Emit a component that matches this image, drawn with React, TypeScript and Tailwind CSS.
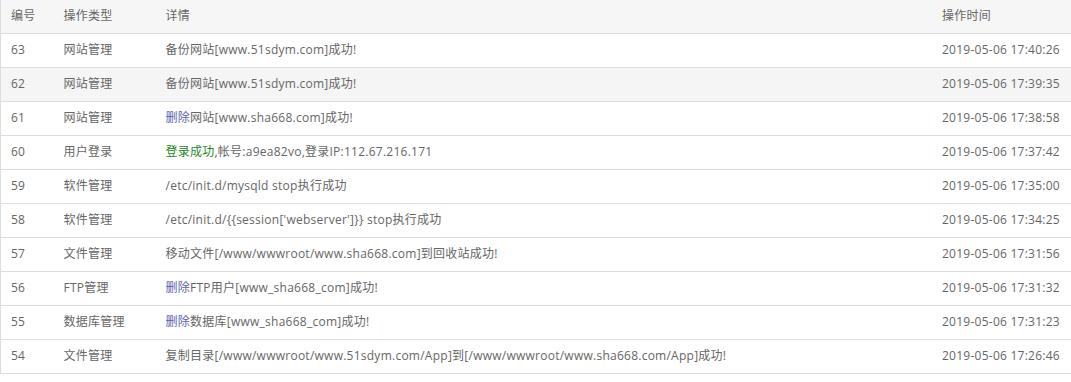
const rows: { id: number; type: string; detail: React.ReactNode; time: string; hover?: boolean }[] = [
  { id: 63, type: "网站管理", detail: "备份网站[www.51sdym.com]成功!", time: "2019-05-06 17:40:26" },
  { id: 62, type: "网站管理", detail: "备份网站[www.51sdym.com]成功!", time: "2019-05-06 17:39:35", hover: true },
  {
    id: 61,
    type: "网站管理",
    detail: (
      <>
        <span className="text-[#5a5fb0]">删除</span>网站[www.sha668.com]成功!
      </>
    ),
    time: "2019-05-06 17:38:58",
  },
  {
    id: 60,
    type: "用户登录",
    detail: (
      <>
        <span className="text-[#1a8a1a]">登录成功</span>,帐号:a9ea82vo,登录IP:112.67.216.171
      </>
    ),
    time: "2019-05-06 17:37:42",
  },
  { id: 59, type: "软件管理", detail: "/etc/init.d/mysqld stop执行成功", time: "2019-05-06 17:35:00" },
  { id: 58, type: "软件管理", detail: "/etc/init.d/{{session['webserver']}} stop执行成功", time: "2019-05-06 17:34:25" },
  { id: 57, type: "文件管理", detail: "移动文件[/www/wwwroot/www.sha668.com]到回收站成功!", time: "2019-05-06 17:31:56" },
  {
    id: 56,
    type: "FTP管理",
    detail: (
      <>
        <span className="text-[#5a5fb0]">删除</span>FTP用户[www_sha668_com]成功!
      </>
    ),
    time: "2019-05-06 17:31:32",
  },
  {
    id: 55,
    type: "数据库管理",
    detail: (
      <>
        <span className="text-[#5a5fb0]">删除</span>数据库[www_sha668_com]成功!
      </>
    ),
    time: "2019-05-06 17:31:23",
  },
  {
    id: 54,
    type: "文件管理",
    detail: "复制目录[/www/wwwroot/www.51sdym.com/App]到[/www/wwwroot/www.sha668.com/App]成功!",
    time: "2019-05-06 17:26:46",
  },
];

export default function App() {
  return (
    <div
      className="w-[1071px] h-[382px] bg-white text-[12px] tracking-[0.25px] text-[#666]"
      style={{ fontFamily: '"Open Sans", "Noto Sans CJK SC", sans-serif' }}
    >
      <table className="w-full border-collapse table-fixed border-l border-[#ddd]">
        <colgroup>
          <col className="w-[53px]" />
          <col className="w-[102px]" />
          <col />
          <col className="w-[139px]" />
        </colgroup>
        <thead>
          <tr className="h-[33px] bg-[#f6f6f6] border-b border-[#ddd]">
            <th className="px-[10px] text-left font-normal">编号</th>
            <th className="px-[10px] text-left font-normal">操作类型</th>
            <th className="px-[10px] text-left font-normal">详情</th>
            <th className="px-[10px] text-left font-normal">操作时间</th>
          </tr>
        </thead>
        <tbody>
          {rows.map((r) => (
            <tr key={r.id} className={`h-[34px] border-b border-[#ddd] ${r.hover ? "bg-[#f5f5f5]" : ""}`}>
              <td className="px-[10px]">{r.id}</td>
              <td className="px-[10px]">{r.type}</td>
              <td className="px-[10px] whitespace-nowrap">{r.detail}</td>
              <td className="px-[10px] whitespace-nowrap">{r.time}</td>
            </tr>
          ))}
        </tbody>
      </table>
    </div>
  );
}
